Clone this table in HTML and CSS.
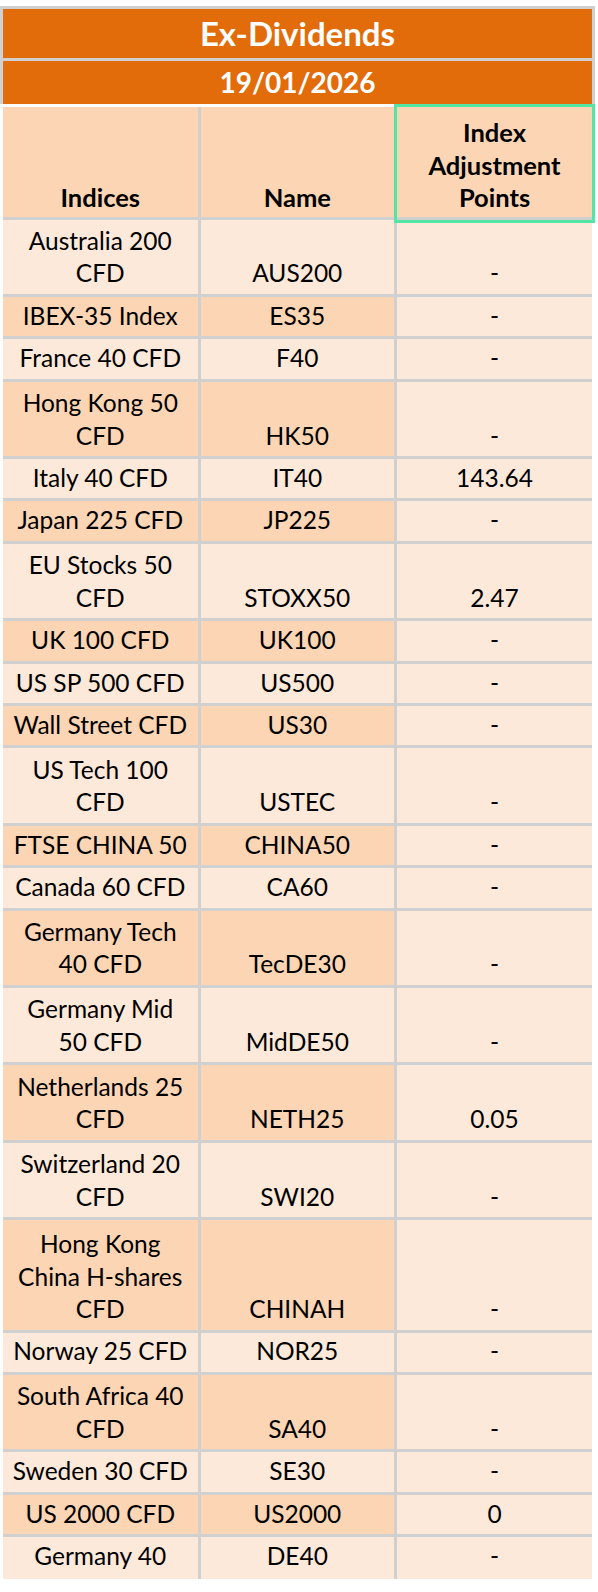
FILE: index.html
```html
<!DOCTYPE html>
<html>
<head>
<meta charset="utf-8">
<link rel="stylesheet" href="styles.css">
</head>
<body>
<div class="sheet">
  <div class="banner">
    <div class="title">Ex-Dividends</div>
    <div class="date">19/01/2026</div>
  </div>
  <table class="grid">
    <colgroup><col class="c1"><col class="c2"><col class="c3"></colgroup>
    <thead>
      <tr><th>Indices</th><th>Name</th><th class="sel">Index<br>Adjustment<br>Points</th></tr>
    </thead>
    <tbody>
      <tr class="h2"><td>Australia 200<br>CFD</td><td>AUS200</td><td>-</td></tr>
      <tr class="h1"><td>IBEX-35 Index</td><td>ES35</td><td>-</td></tr>
      <tr class="h1"><td>France 40 CFD</td><td>F40</td><td>-</td></tr>
      <tr class="h2"><td>Hong Kong 50<br>CFD</td><td>HK50</td><td>-</td></tr>
      <tr class="h1"><td>Italy 40 CFD</td><td>IT40</td><td>143.64</td></tr>
      <tr class="h1"><td>Japan 225 CFD</td><td>JP225</td><td>-</td></tr>
      <tr class="h2"><td>EU Stocks 50<br>CFD</td><td>STOXX50</td><td>2.47</td></tr>
      <tr class="h1"><td>UK 100 CFD</td><td>UK100</td><td>-</td></tr>
      <tr class="h1"><td>US SP 500 CFD</td><td>US500</td><td>-</td></tr>
      <tr class="h1"><td>Wall Street CFD</td><td>US30</td><td>-</td></tr>
      <tr class="h2"><td>US Tech 100<br>CFD</td><td>USTEC</td><td>-</td></tr>
      <tr class="h1"><td>FTSE CHINA 50</td><td>CHINA50</td><td>-</td></tr>
      <tr class="h1"><td>Canada 60 CFD</td><td>CA60</td><td>-</td></tr>
      <tr class="h2"><td>Germany Tech<br>40 CFD</td><td>TecDE30</td><td>-</td></tr>
      <tr class="h2"><td>Germany Mid<br>50 CFD</td><td>MidDE50</td><td>-</td></tr>
      <tr class="h2"><td>Netherlands 25<br>CFD</td><td>NETH25</td><td>0.05</td></tr>
      <tr class="h2"><td>Switzerland 20<br>CFD</td><td>SWI20</td><td>-</td></tr>
      <tr class="h3"><td>Hong Kong<br>China H-shares<br>CFD</td><td>CHINAH</td><td>-</td></tr>
      <tr class="h1"><td>Norway 25 CFD</td><td>NOR25</td><td>-</td></tr>
      <tr class="h2"><td>South Africa 40<br>CFD</td><td>SA40</td><td>-</td></tr>
      <tr class="h1"><td>Sweden 30 CFD</td><td>SE30</td><td>-</td></tr>
      <tr class="h1"><td>US 2000 CFD</td><td>US2000</td><td>0</td></tr>
      <tr class="h1"><td>Germany 40</td><td>DE40</td><td>-</td></tr>
    </tbody>
  </table>
</div>
</body>
</html>
```

FILE: styles.css
```css
html, body {
  margin: 0;
  padding: 0;
  background: #ffffff;
}
body {
  font-family: Lato, "Liberation Sans", sans-serif;
  color: #000000;
}
.sheet {
  width: 595px;
  padding-top: 6px;
}
.banner {
  border: 3px solid #d0d0d0;
  border-bottom: 0;
  width: 589px;
  color: #ffffff;
  font-weight: 700;
  text-align: center;
}
.title {
  background: #e26b0a;
  height: 49px;
  line-height: 49px;
  font-size: 33px;
}
.date {
  background: #e26b0a;
  border-top: 3px solid #d0d0d0;
  height: 43px;
  line-height: 43px;
  font-size: 28px;
}
.grid {
  table-layout: fixed;
  width: 589px;
  margin: 3px 0 0 3px;
  border-collapse: separate;
  border-spacing: 0;
}
.c1 { width: 197.5px; }
.c2 { width: 196.5px; }
.c3 { width: 195px; }
.grid th,
.grid td {
  padding: 0 0 4px;
  text-align: center;
  vertical-align: bottom;
  font-size: 24.5px;
  line-height: 32.5px;
  border-bottom: 3px solid #d0d0d0;
  background: #fde9d9;
  white-space: nowrap;
}
.grid th {
  font-weight: 700;
  font-size: 25.5px;
  background: #fcd5b4;
  padding-bottom: 3px;
}
.grid thead tr {
  height: 112.5px;
}
.grid th:not(:last-child),
.grid td:not(:last-child) {
  border-right: 3px solid #d0d0d0;
}
.grid th.sel {
  outline: 3px solid #52e5a3;
}
.grid tbody tr:nth-child(even) td:not(:last-child) {
  background: #fcd5b4;
}
.grid tbody tr:last-child td {
  border-bottom: 0;
  padding-bottom: 7px;
}
.h1 { height: 42.4px; }
.h2 { height: 77.4px; }
.h3 { height: 112.4px; }
```
